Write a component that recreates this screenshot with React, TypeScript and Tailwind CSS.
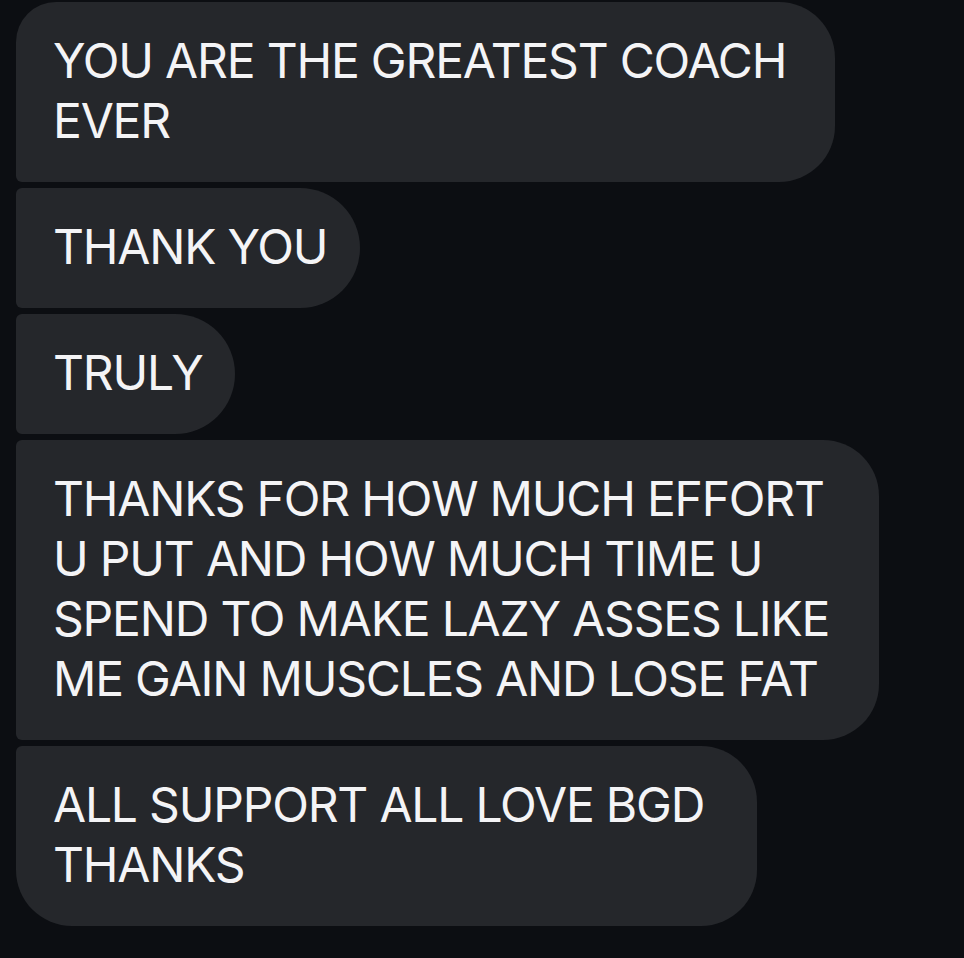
const messages = [
  { lines: ["YOU ARE THE GREATEST COACH", "EVER"], shape: "rounded-tl-[40px] rounded-bl-[6px] rounded-r-[56px]", width: "w-[819px]" },
  { lines: ["THANK YOU"], shape: "rounded-l-[6px] rounded-r-[60px]", width: "w-[344px]" },
  { lines: ["TRULY"], shape: "rounded-l-[6px] rounded-r-[60px]", width: "w-[219px]" },
  {
    lines: [
      "THANKS FOR HOW MUCH EFFORT",
      "U PUT AND HOW MUCH TIME U",
      "SPEND TO MAKE LAZY ASSES LIKE",
      "ME GAIN MUSCLES AND LOSE FAT",
    ],
    shape: "rounded-l-[6px] rounded-r-[56px]",
    width: "w-[863px]",
  },
  { lines: ["ALL SUPPORT ALL LOVE BGD", "THANKS"], shape: "rounded-tl-[6px] rounded-bl-[56px] rounded-r-[56px]", width: "w-[741px]" },
];

const App = () => {
  return (
    <div className="min-h-[958px] w-[964px] bg-[#0c0e12] pl-4 pt-[2px] font-['Inter','Liberation_Sans',sans-serif]">
      <div className="flex flex-col items-start gap-[6px]">
        {messages.map((m, i) => (
          <div
            key={i}
            className={`bg-[#25272b] pt-[29px] pb-[31px] pl-[37px] text-[48px] leading-[60px] tracking-[-1.2px] text-[#f4f4f6] whitespace-nowrap ${m.shape} ${m.width}`}
          >
            {m.lines.map((l, j) => (
              <div key={j}>{l}</div>
            ))}
          </div>
        ))}
      </div>
    </div>
  );
};

export default App;
